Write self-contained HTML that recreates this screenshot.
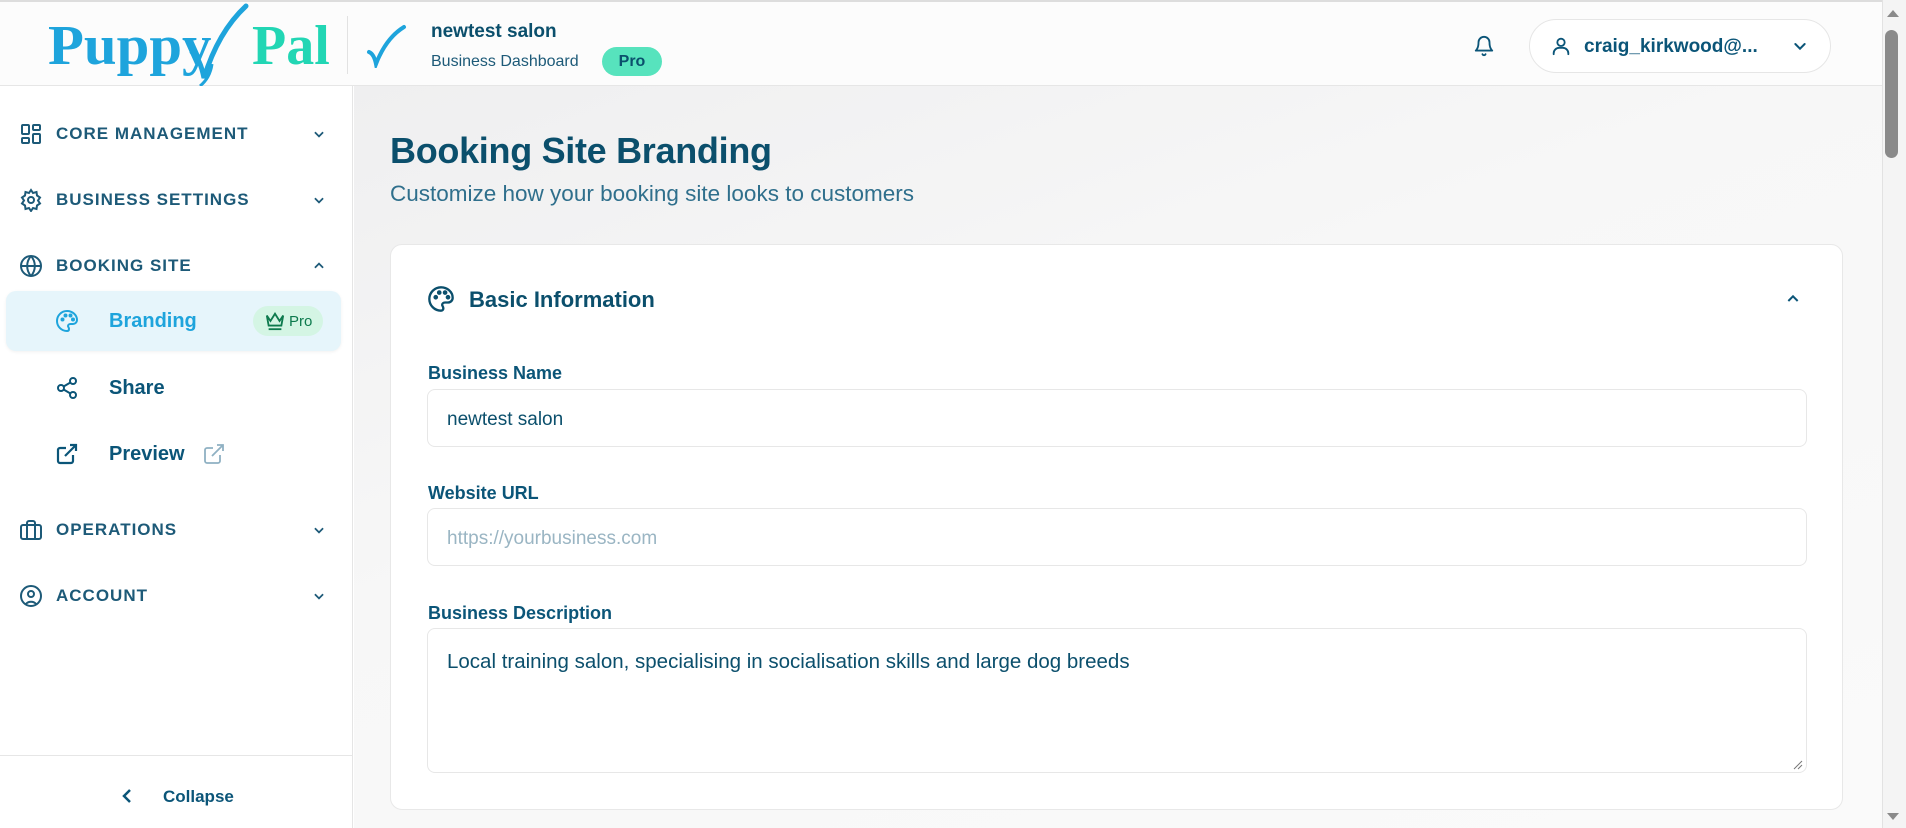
<!DOCTYPE html>
<html><head><meta charset="utf-8"><style>
*{box-sizing:border-box;margin:0;padding:0}
body{width:1906px;height:828px;overflow:hidden;font-family:"Liberation Sans",sans-serif;color:#0b5578;background:#fff;position:relative}
.hdr{position:absolute;left:0;top:0;width:1882px;height:86px;background:#fcfcfc;border-bottom:1px solid #e6e6e6;border-top:2px solid #ddd}
.side{position:absolute;left:0;top:86px;width:353px;height:742px;background:#fff;border-right:1px solid #e5e5e5}
.main{position:absolute;left:354px;top:86px;width:1528px;height:742px;background:linear-gradient(160deg,#efeff0 0%,#f7f7f7 40%,#fafafa 100%)}
.sb{position:absolute;left:1882px;top:0;width:24px;height:828px;background:#f4f4f4;border-left:1px solid #e2e2e2}
.thumb{position:absolute;left:1885px;top:30px;width:13px;height:128px;background:#8a8a8a;border-radius:7px}
.nav{position:absolute;left:19px;display:flex;align-items:center;font-size:17px;font-weight:bold;letter-spacing:1px;color:#1d5a78}
.nav svg{margin-right:13px}
.chev{position:absolute;left:312px}
.sub{position:absolute;left:55px;display:flex;align-items:center;font-size:20px;font-weight:bold;color:#0b5578}
.lbl{position:absolute;left:428px;font-size:18px;font-weight:bold;color:#0b5578}
.inp{position:absolute;left:427px;width:1380px;border:1px solid #e7e7e7;border-radius:8px;background:#fff;font-size:19px;padding-left:19px;display:flex;align-items:center}
</style></head><body>
<div class="hdr">
  <div style="position:absolute;left:48px;top:12px;font-family:'Liberation Serif',serif;font-weight:bold;font-size:56px;letter-spacing:0px;color:#1ea4dc;transform:scaleX(1.05);transform-origin:left">Puppy</div>
  <div style="position:absolute;left:252px;top:12px;font-family:'Liberation Serif',serif;font-weight:bold;font-size:56px;color:#22d6b4">Pal</div>
  <svg style="position:absolute;left:188px;top:0" width="62" height="88" viewBox="0 0 62 88"><path d="M4 50 Q12 56 16 76 Q30 30 58 4" stroke="#1ea4dc" stroke-width="5" fill="none" stroke-linecap="round"/><path d="M12 84 Q22 76 24 62" stroke="#1ea4dc" stroke-width="3" fill="none"/></svg>
  <div style="position:absolute;left:347px;top:14px;width:1px;height:58px;background:#e2e2e2"></div>
  <svg style="position:absolute;left:366px;top:22px" width="42" height="44" viewBox="0 0 42 44"><path d="M3 28 Q8 30 10 40 Q20 14 38 3" stroke="#1ea4dc" stroke-width="4" fill="none" stroke-linecap="round"/></svg>
  <div style="position:absolute;left:431px;top:19px;font-size:19px;font-weight:bold;color:#0b4f6c">newtest salon</div>
  <div style="position:absolute;left:431px;top:51px;font-size:16px;color:#1d5a78">Business Dashboard</div>
  <div style="position:absolute;left:602px;top:45px;width:60px;height:29px;border-radius:15px;background:#57e3bd;color:#0b4f6c;font-weight:bold;font-size:16px;text-align:center;line-height:29px">Pro</div>
  <svg style="position:absolute;left:1473px;top:32px" width="22" height="24" viewBox="0 0 24 24" fill="none" stroke="#0b5578" stroke-width="2" stroke-linecap="round" stroke-linejoin="round"><path d="M6 8a6 6 0 0 1 12 0c0 7 3 9 3 9H3s3-2 3-9"/><path d="M10.3 21a1.9 1.9 0 0 0 3.4 0"/></svg>
  <div style="position:absolute;left:1529px;top:17px;width:302px;height:54px;border:1px solid #e6e6e6;border-radius:27px;background:#fff">
    <svg style="position:absolute;left:20px;top:14px" width="22" height="24" viewBox="0 0 24 24" fill="none" stroke="#0b5578" stroke-width="2" stroke-linecap="round"><circle cx="12" cy="8" r="4"/><path d="M4 21v-1a6 6 0 0 1 6-6h4a6 6 0 0 1 6 6v1"/></svg>
    <div style="position:absolute;left:54px;top:16px;font-size:19px;font-weight:bold;color:#0b5578">craig_kirkwood@...</div>
    <svg style="position:absolute;left:262px;top:18px" width="16" height="16" viewBox="0 0 24 24" fill="none" stroke="#0b5578" stroke-width="3" stroke-linecap="round"><path d="M5 9l7 7 7-7"/></svg>
  </div>
</div>
<div class="side">
  <div class="nav" style="top:36px"><svg width="24" height="24" viewBox="0 0 24 24" fill="none" stroke="#1d5a78" stroke-width="2"><rect x="3" y="3" width="7" height="9" rx="1"/><rect x="14" y="3" width="7" height="5" rx="1"/><rect x="14" y="12" width="7" height="9" rx="1"/><rect x="3" y="16" width="7" height="5" rx="1"/></svg>CORE MANAGEMENT</div>
  <div class="nav" style="top:102px"><svg width="24" height="24" viewBox="0 0 24 24" fill="none" stroke="#1d5a78" stroke-width="2"><circle cx="12" cy="12" r="3"/><path d="M12 2l2 3 3.5-1 .5 3.5 3 2-2 3 2 3-3 2-.5 3.5-3.5-1-2 3-2-3-3.5 1-.5-3.5-3-2 2-3-2-3 3-2 .5-3.5 3.5 1z"/></svg>BUSINESS SETTINGS</div>
  <div class="nav" style="top:168px"><svg width="24" height="24" viewBox="0 0 24 24" fill="none" stroke="#1d5a78" stroke-width="2"><circle cx="12" cy="12" r="10"/><path d="M2 12h20M12 2a15 15 0 0 1 0 20M12 2a15 15 0 0 0 0 20"/></svg>BOOKING SITE</div>
  <div class="nav" style="top:432px"><svg width="24" height="24" viewBox="0 0 24 24" fill="none" stroke="#1d5a78" stroke-width="2"><rect x="2" y="7" width="20" height="14" rx="2"/><path d="M8 21V5a2 2 0 0 1 2-2h4a2 2 0 0 1 2 2v16"/></svg>OPERATIONS</div>
  <div class="nav" style="top:498px"><svg width="24" height="24" viewBox="0 0 24 24" fill="none" stroke="#1d5a78" stroke-width="2"><circle cx="12" cy="12" r="10"/><circle cx="12" cy="10" r="3"/><path d="M7 20a6 5 0 0 1 10 0"/></svg>ACCOUNT</div>
  <svg class="chev" style="top:41px" width="14" height="14" viewBox="0 0 24 24" fill="none" stroke="#1d5a78" stroke-width="3"><path d="M5 9l7 7 7-7"/></svg>
  <svg class="chev" style="top:107px" width="14" height="14" viewBox="0 0 24 24" fill="none" stroke="#1d5a78" stroke-width="3"><path d="M5 9l7 7 7-7"/></svg>
  <svg class="chev" style="top:173px" width="14" height="14" viewBox="0 0 24 24" fill="none" stroke="#1d5a78" stroke-width="3"><path d="M5 15l7-7 7 7"/></svg>
  <svg class="chev" style="top:437px" width="14" height="14" viewBox="0 0 24 24" fill="none" stroke="#1d5a78" stroke-width="3"><path d="M5 9l7 7 7-7"/></svg>
  <svg class="chev" style="top:503px" width="14" height="14" viewBox="0 0 24 24" fill="none" stroke="#1d5a78" stroke-width="3"><path d="M5 9l7 7 7-7"/></svg>
  <div style="position:absolute;left:6px;top:205px;width:335px;height:60px;border-radius:10px;background:#e6f5fb;box-shadow:0 1px 3px rgba(0,0,0,.06)"></div>
  <div class="sub" style="top:223px;color:#1ea4dc"><svg style="margin-right:30px" width="24" height="24" viewBox="0 0 24 24" fill="none" stroke="#1ea4dc" stroke-width="2"><path d="M12 2a10 10 0 0 0 0 20c1.5 0 2-1 2-2 0-1.5-1-2-1-3s1-2 2.5-2H18a4 4 0 0 0 4-4c0-5-4.5-9-10-9z"/><circle cx="7.5" cy="10.5" r="1" fill="#1ea4dc"/><circle cx="10.5" cy="6.5" r="1" fill="#1ea4dc"/><circle cx="15.5" cy="6.5" r="1" fill="#1ea4dc"/><circle cx="18" cy="10.5" r="1" fill="#1ea4dc"/></svg>Branding</div>
  <div style="position:absolute;left:253px;top:220px;width:70px;height:30px;border-radius:15px;background:#d4f5e4;display:flex;align-items:center;padding-left:11px;font-size:15px;color:#0d7a4d"><svg width="22" height="20" viewBox="0 0 24 22" fill="none" stroke="#0d7a4d" stroke-width="2"><path d="M3 5l4 6 5-8 5 8 4-6-2 11H5z"/><path d="M5 20h14"/></svg><span style="margin-left:3px">Pro</span></div>
  <div class="sub" style="top:290px"><svg style="margin-right:30px" width="24" height="24" viewBox="0 0 24 24" fill="none" stroke="#0b5578" stroke-width="2"><circle cx="18" cy="5" r="3"/><circle cx="6" cy="12" r="3"/><circle cx="18" cy="19" r="3"/><path d="M8.6 13.5l6.8 4M15.4 6.5l-6.8 4"/></svg>Share</div>
  <div class="sub" style="top:356px"><svg style="margin-right:30px" width="24" height="24" viewBox="0 0 24 24" fill="none" stroke="#0b5578" stroke-width="2.2"><path d="M18 13v6a2 2 0 0 1-2 2H5a2 2 0 0 1-2-2V8a2 2 0 0 1 2-2h6M15 3h6v6M10 14L21 3"/></svg>Preview<svg style="margin-left:17px" width="24" height="24" viewBox="0 0 24 24" fill="none" stroke="#8fb1c3" stroke-width="1.8"><path d="M18 13v6a2 2 0 0 1-2 2H5a2 2 0 0 1-2-2V8a2 2 0 0 1 2-2h6M15 3h6v6M10 14L21 3"/></svg></div>
  <div style="position:absolute;left:0;top:669px;width:353px;height:1px;background:#e6e6e6"></div>
  <svg style="position:absolute;left:120px;top:701px" width="14" height="18" viewBox="0 0 14 18" fill="none" stroke="#0b5578" stroke-width="2.5"><path d="M10 3L4 9l6 6"/></svg>
  <div style="position:absolute;left:163px;top:701px;font-size:17px;font-weight:bold;color:#0b5578">Collapse</div>
</div>
<div class="main">
  <div style="position:absolute;left:36px;top:44px;font-size:36px;font-weight:bold;color:#0b4f6c;letter-spacing:-0.3px">Booking Site Branding</div>
  <div style="position:absolute;left:36px;top:95px;font-size:22.5px;color:#2f6f8c">Customize how your booking site looks to customers</div>
  <div style="position:absolute;left:36px;top:158px;width:1453px;height:566px;background:#fff;border:1px solid #e8e8e8;border-radius:12px"></div>
</div>
<svg style="position:absolute;left:427px;top:285px" width="28" height="28" viewBox="0 0 24 24" fill="none" stroke="#0b4f6c" stroke-width="2"><path d="M12 2a10 10 0 0 0 0 20c1.5 0 2-1 2-2 0-1.5-1-2-1-3s1-2 2.5-2H18a4 4 0 0 0 4-4c0-5-4.5-9-10-9z"/><circle cx="7.5" cy="10.5" r="1" fill="#0b4f6c"/><circle cx="10.5" cy="6.5" r="1" fill="#0b4f6c"/><circle cx="15.5" cy="6.5" r="1" fill="#0b4f6c"/><circle cx="18" cy="10.5" r="1" fill="#0b4f6c"/></svg>
<div style="position:absolute;left:469px;top:287px;font-size:22px;font-weight:bold;color:#0b4f6c">Basic Information</div>
<svg style="position:absolute;left:1785px;top:291px" width="16" height="16" viewBox="0 0 24 24" fill="none" stroke="#0b5578" stroke-width="3"><path d="M5 15l7-7 7 7"/></svg>
<div class="lbl" style="top:363px">Business Name</div>
<div class="inp" style="top:389px;height:58px;color:#0b4f6c;padding-top:3px">newtest salon</div>
<div class="lbl" style="top:483px">Website URL</div>
<div class="inp" style="top:508px;height:58px;color:#9ab5c3;padding-top:3px">https://yourbusiness.com</div>
<div class="lbl" style="top:603px">Business Description</div>
<div class="inp" style="top:628px;height:145px;align-items:flex-start;padding-top:21px;color:#0b4f6c;font-size:20.5px">Local training salon, specialising in socialisation skills and large dog breeds</div>
<svg style="position:absolute;left:1793px;top:760px" width="10" height="10" viewBox="0 0 10 10" stroke="#777" stroke-width="1"><path d="M1 9L9 1M5 9L9 5"/></svg>
<div class="sb"></div><div class="thumb"></div>
<svg style="position:absolute;left:1886px;top:8px" width="14" height="10"><path d="M1 9L7 2 13 9z" fill="#8a8a8a"/></svg>
<svg style="position:absolute;left:1886px;top:812px" width="14" height="10"><path d="M1 1L7 8 13 1z" fill="#8a8a8a"/></svg>
</body></html>
